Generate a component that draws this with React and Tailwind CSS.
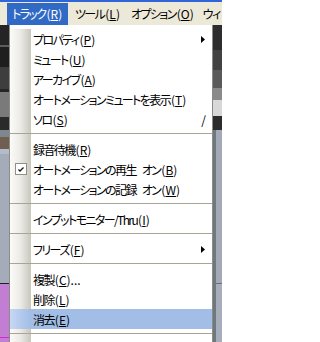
const font = {
  fontFamily: '"Noto Sans CJK JP", "Noto Sans", sans-serif',
};

const Col = ({ hot }) => (
  <div
    className={
      "w-[21px] shrink-0 self-stretch " +
      (hot
        ? "bg-gradient-to-r from-[#c6d8f3] to-[#a2bde6]"
        : "bg-gradient-to-r from-[#fbfbf9] via-[#ebeae5] to-[#c9c6bc]")
    }
  />
);

const Key = ({ label, k, tail }) => {
  const parts = label.split(" ");
  return (
    <span className="whitespace-nowrap">
      <span className="tracking-[-1.6px]">
        {parts.map((p, i) => (
          <span key={i}>
            {i > 0 && <span className="inline-block w-[6px]" />}
            {p}
          </span>
        ))}
      </span>
      <span className="ml-[1px] tracking-[0px]">
        (<span className="underline underline-offset-1">{k}</span>){tail}
      </span>
    </span>
  );
};

const Item = ({ label, k, tail, arrow, shortcut, checked, hot }) => (
  <div className={"flex h-[20px] items-stretch " + (hot ? "bg-[#a2bde6]" : "")}>
    <div className="relative flex w-[21px] shrink-0 items-center justify-center">
      <Col hot={hot} />
      {checked && (
        <div className="absolute left-[5px] top-[4px] flex h-[12px] w-[12px] items-center justify-center border border-[#8f8e89] bg-white">
          <svg width="6" height="5" viewBox="0 0 6 5">
            <path d="M0.5 2.5 L2 4 L5.5 0.5" fill="none" stroke="#1a1a1a" strokeWidth="1.3" />
          </svg>
        </div>
      )}
    </div>
    <div className="flex flex-1 items-center pl-[2px] pr-[5px] pt-[1px] text-[12px] text-black">
      <Key label={label} k={k} tail={tail} />
      <div className="flex-1" />
      {shortcut && <span className="mr-[1px]">{shortcut}</span>}
      {arrow && (
        <svg width="4" height="7" viewBox="0 0 4 7" className="mr-[2px]">
          <path d="M0 0 L4 3.5 L0 7 Z" fill="#000" />
        </svg>
      )}
    </div>
  </div>
);

const Sep = () => (
  <div className="flex h-[10px] flex-col">
    <div className="flex h-[5px] border-b border-[#a8a596]">
      <Col />
    </div>
    <div className="flex flex-1">
      <Col />
    </div>
  </div>
);

const band = (h, c) => <div className={h + " " + c} />;

export default function App() {
  return (
    <div
      className="h-[342px] w-[222px] overflow-hidden bg-[#ece9d8] [font-feature-settings:'palt']"
      style={font}
    >
      <div className="h-[2px] bg-[#2f65d9]" />
      {/* menu bar */}
      <div className="flex h-[23px] items-stretch whitespace-nowrap bg-[#ece9d8] pt-[1px] text-[12px] text-black">
        <div className="ml-[7px] flex w-[61px] shrink-0 items-center bg-[#316ac5] pl-[5px] text-white">
          <Key label="トラック" k="R" />
        </div>
        <div className="flex shrink-0 items-center pl-[7px]">
          <Key label="ツール" k="L" />
        </div>
        <div className="flex shrink-0 items-center pl-[11px]">
          <Key label="オプション" k="O" />
        </div>
        <div className="flex shrink-0 items-center pl-[9px] tracking-[-1.6px]">ウィ</div>
      </div>

      <div className="flex h-[317px]">
        {/* app behind, left */}
        <div className="flex w-[9px] shrink-0 flex-col">
          {band("h-[20px]", "bg-[#242424]")}
          {band("h-[2px]", "bg-[#5c5c5c]")}
          {band("h-[20px]", "bg-[#1e1e1e]")}
          {band("h-[22px]", "bg-[#3e3e3e]")}
          {band("h-[3px]", "bg-[#262626]")}
          {band("h-[25px]", "bg-[#7a7a7a]")}
          {band("h-[13px]", "bg-[#2a2a2a]")}
          {band("h-[7px]", "bg-[#7e8690]")}
          {band("h-[12px]", "bg-[#6f5f51]")}
          {band("h-[5px]", "bg-[#b4bccb]")}
          {band("h-[129px]", "bg-[#a4acb9]")}
          {band("h-[1px]", "bg-[#202020]")}
          {band("h-[53px]", "bg-[#c27ed3]")}
          {band("h-[1px]", "bg-[#d02ad8]")}
          {band("flex-1", "bg-[#c27ed3]")}
        </div>

        {/* popup menu */}
        <div className="flex w-[204px] shrink-0 flex-col border-l border-r border-[#8d8b84] bg-white pt-[4px]">
          <Item label="プロパティ" k="P" arrow />
          <Item label="ミュート" k="U" />
          <Item label="アーカイブ" k="A" />
          <Item label="オートメーションミュートを表示" k="T" />
          <Item label="ソロ" k="S" shortcut="/" />
          <Sep />
          <Item label="録音待機" k="R" />
          <Item label="オートメーションの再生 オン" k="B" checked />
          <Item label="オートメーションの記録 オン" k="W" />
          <Sep />
          <Item label="インプットモニター/Thru" k="I" />
          <Sep />
          <Item label="フリーズ" k="F" arrow />
          <Sep />
          <Item label="複製" k="C" tail="..." />
          <Item label="削除" k="L" />
          <Item label="消去" k="E" hot />
          <Sep />
          <div className="flex flex-1">
            <Col />
          </div>
        </div>

        {/* app behind, right */}
        <div className="flex w-[9px] shrink-0 flex-col">
          {band("h-[25px]", "bg-[#2e2e2e]")}
          {band("h-[20px]", "bg-[#424242]")}
          {band("h-[18px]", "bg-[#5a5a5a]")}
          {band("h-[12px]", "bg-[#8a8a8a]")}
          {band("h-[16px]", "bg-[#d8d8d8]")}
          {band("h-[14px]", "bg-[#2c2c2c]")}
          <div className="flex flex-1 flex-col border-l-[3px] border-[#6f7780]">
            {band("h-[153px]", "bg-[#a2aab7]")}
            {band("h-[1px]", "bg-[#6a7078]")}
            {band("flex-1", "bg-[#a6aebb]")}
          </div>
        </div>
      </div>
    </div>
  );
}
